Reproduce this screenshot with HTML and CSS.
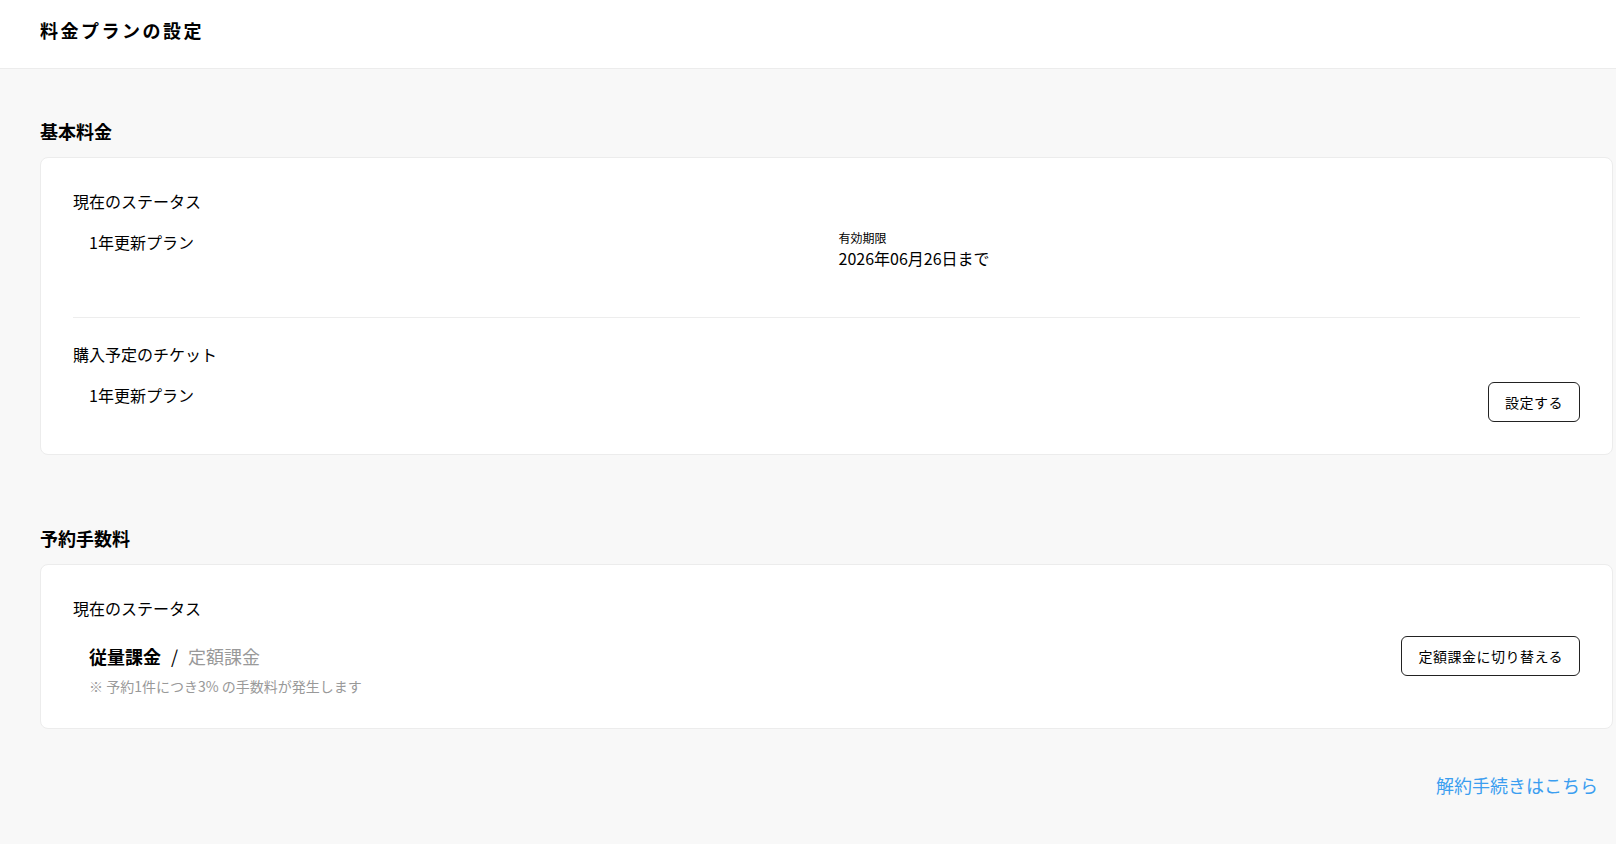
FILE: index.html
```html
<!DOCTYPE html>
<html lang="ja">
<head>
    <meta charset="utf-8">
    <title>料金プランの設定</title>
    <link rel="stylesheet" href="styles.css">
</head>

<body>
    <div class="page-header">
        <h1>料金プランの設定</h1>
    </div>

    <div class="container">
        <!-- 基本料金 -->
        <div class="plan-block">
            <h2>基本料金</h2>
            <div class="card">
                <div class="card-section first">
                    <div class="section-label">現在のステータス</div>
                    <div class="status-grid">
                        <div class="plan-name">1年更新プラン</div>
                        <div class="expire">
                            <div class="expire-label">有効期限</div>
                            <div class="expire-date">2026年06月26日まで</div>
                        </div>
                    </div>
                </div>

                <div class="card-section">
                    <div class="section-label">購入予定のチケット</div>
                    <div class="status-row">
                        <div class="plan-name">1年更新プラン</div>
                        <input type="button" value="設定する" class="outline-button">
                    </div>
                </div>
            </div>
        </div>

        <!-- 予約手数料 -->
        <div class="plan-block fee-block">
            <h2>予約手数料</h2>
            <div class="card">
                <div class="card-section">
                    <div class="section-label">現在のステータス</div>
                    <div class="status-row">
                        <div class="fee-type">
                            <div class="fee-names">
                                <span class="fee-active">従量課金</span><span class="fee-slash">/</span><span class="fee-inactive">定額課金</span>
                            </div>
                            <div class="fee-note">※ 予約1件につき3% の手数料が発生します</div>
                        </div>
                        <input type="button" value="定額課金に切り替える" class="outline-button">
                    </div>
                </div>
            </div>
        </div>

        <div class="cancel-link">
            <a href="#">解約手続きはこちら</a>
        </div>
    </div>
</body>
</html>
```

FILE: styles.css
```css
body {
    margin: 0;
    font-family: "Noto Sans CJK JP", "Noto Sans", sans-serif;
    color: #000;
    background-color: #f8f8f8;
}

.page-header {
    height: 69px;
    box-sizing: border-box;
    padding: 17px 40px 0;
    background-color: #fff;
    border-bottom: 1px solid #ececec;
}

.page-header h1 {
    margin: 0;
    font-size: 18px;
    line-height: 27px;
    font-weight: bold;
    letter-spacing: 2.5px;
}

.container {
    padding: 49px 3px 40px 40px;
}

.plan-block h2 {
    margin: 0 0 12px;
    font-size: 18px;
    line-height: 27px;
    font-weight: bold;
}

.fee-block {
    margin-top: 70px;
}

.card {
    background-color: #fff;
    border: 1px solid #ececec;
    border-radius: 8px;
    padding: 31px 32px 32px;
}

.card-section {
    padding-top: 24px;
}

.card-section:first-child {
    padding-top: 0;
}

.card-section.first {
    padding-bottom: 47px;
    border-bottom: 1px solid #ededed;
}

.section-label {
    font-size: 16px;
    line-height: 24px;
    margin-bottom: 16px;
}

.status-grid {
    display: grid;
    grid-template-columns: 1fr 1fr;
    column-gap: 8px;
    padding-left: 16px;
}

.status-row {
    display: flex;
    justify-content: space-between;
    align-items: flex-start;
    padding-left: 16px;
}

.plan-name {
    font-size: 16px;
    line-height: 24px;
    padding-top: 1px;
}

.expire-label {
    font-size: 12px;
    line-height: 17px;
}

.expire-date {
    font-size: 16px;
    line-height: 24px;
}

.outline-button {
    height: 40px;
    padding: 0 16px;
    font-family: inherit;
    font-size: 14px;
    letter-spacing: 0.5px;
    color: #000;
    background-color: #fff;
    border: 1px solid #222;
    border-radius: 6px;
    cursor: pointer;
}

.fee-names {
    font-size: 18px;
    line-height: 40px;
}

.fee-active {
    font-weight: bold;
}

.fee-slash {
    margin: 0 10px;
}

.fee-inactive {
    color: #999;
}

.fee-note {
    font-size: 14px;
    line-height: 20px;
    color: #999;
}

.cancel-link {
    margin-top: 43px;
    padding-right: 15px;
    text-align: right;
}

.cancel-link a {
    font-size: 18px;
    line-height: 27px;
    color: #3b9ef0;
    text-decoration: none;
}
```
